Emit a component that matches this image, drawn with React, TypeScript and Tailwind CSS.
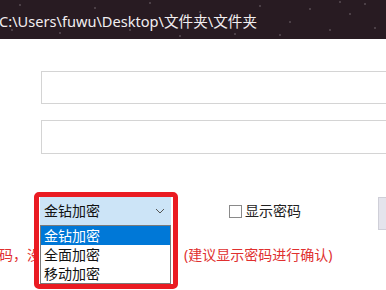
import React from "react";

const font = { fontFamily: '"Noto Sans", "Noto Sans CJK SC", sans-serif' };

export default function App() {
  return (
    <div
      className="relative w-[386px] h-[290px] overflow-hidden bg-white"
      style={font}
    >
      {/* title bar */}
      <div className="relative h-[39px] bg-[#281b22] flex items-center overflow-hidden">
        <svg className="absolute inset-0" width="386" height="39">
          {[
            [20, 5], [60, 33], [95, 8], [130, 30], [150, 3], [200, 12], [235, 34],
            [260, 6], [290, 22], [310, 9], [330, 30], [350, 14], [365, 4], [375, 28],
            [12, 30], [180, 36], [280, 35], [340, 2],
          ].map(([x, y], i) => (
            <circle key={i} cx={x} cy={y} r={0.7} fill="#8a7f88" />
          ))}
        </svg>
        <span className="relative -ml-[1px] pt-[4px] text-[14.6px] leading-none text-[#f2eef0] whitespace-nowrap">
          C:\Users\fuwu\Desktop\文件夹\文件夹
        </span>
      </div>

      {/* inputs */}
      <div className="pl-[41px] pt-[32px] flex flex-col gap-[16px]">
        <div className="h-[33px] border border-[#d4d4d4] border-r-0 bg-white" />
        <div className="h-[34px] border border-[#d4d4d4] border-r-0 bg-white" />
      </div>

      {/* select row */}
      <div className="mt-[43px] h-[28px] flex items-center">
        <div className="relative ml-[40px] w-[131px] h-[28px]">
          <div className="h-full bg-[#cce4f7] flex items-center justify-between pl-[4px] pr-[6px]">
            <span className="text-[14px] leading-none text-[#111]">金钻加密</span>
            <svg width="10" height="6" viewBox="0 0 10 6">
              <path d="M1 1 L5 5 L9 1" stroke="#555" strokeWidth="1" fill="none" />
            </svg>
          </div>
          {/* dropdown list */}
          <div className="absolute top-full left-0 w-[131px] z-10 bg-white border border-[#7a7a7a] flex flex-col">
            <div className="h-[19px] bg-[#0078d7] text-white text-[14px] leading-[19px] pl-[3px]">
              金钻加密
            </div>
            <div className="h-[19px] text-[#111] text-[14px] leading-[19px] pl-[3px]">
              全面加密
            </div>
            <div className="h-[19px] text-[#111] text-[14px] leading-[19px] pl-[3px]">
              移动加密
            </div>
          </div>
          {/* red annotation frame */}
          <div className="absolute -left-[6px] -top-[5px] w-[144px] h-[97px] border-[5px] border-[#ea1b22] rounded-[5px] z-20 pointer-events-none" />
        </div>
        <div className="ml-[58px] flex items-center">
          <div className="w-[13px] h-[13px] border border-[#8a8a8a] bg-white" />
          <span className="ml-[3px] text-[14px] leading-none text-[#222]">显示密码</span>
        </div>
        <div className="ml-auto w-[8px] h-[33px] mt-[5px] bg-[#e4e4ec] border border-[#cfcfd8] border-r-0" />
      </div>

      {/* red hints row */}
      <div className="mt-[21px] h-[18px] flex items-center text-[14px] leading-none text-[#e0302f] whitespace-nowrap">
        <span className="-ml-[1px] w-[36px] overflow-hidden">码，没</span>
        <span className="ml-[149px]">(建议显示密码进行确认)</span>
      </div>
    </div>
  );
}
